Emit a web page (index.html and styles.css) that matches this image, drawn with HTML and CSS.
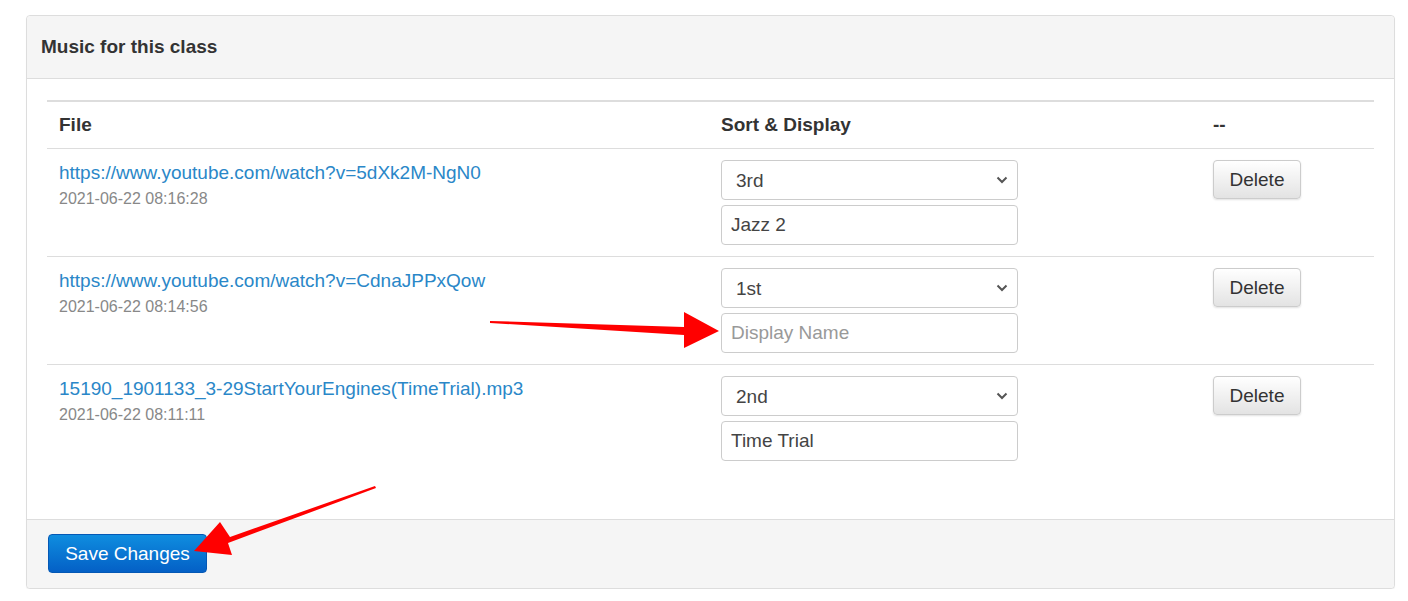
FILE: index.html
```html
<!DOCTYPE html>
<html lang="en">
<head>
    <meta charset="UTF-8">
    <title>Music for this class</title>
    <link rel="stylesheet" href="styles.css">
</head>
<body>
    <div class="panel">
        <div class="panel-heading">Music for this class</div>
        <div class="panel-body">
            <table class="music-table">
                <thead>
                    <tr>
                        <th class="col-file">File</th>
                        <th class="col-sort">Sort &amp; Display</th>
                        <th class="col-action">--</th>
                    </tr>
                </thead>
                <tbody>
                    <tr>
                        <td>
                            <a href="#" class="file-link">https://www.youtube.com/watch?v=5dXk2M-NgN0</a>
                            <div class="file-date">2021-06-22 08:16:28</div>
                        </td>
                        <td>
                            <div class="select-wrap">
                                <select class="field">
                                    <option>1st</option>
                                    <option>2nd</option>
                                    <option selected>3rd</option>
                                </select>
                                <svg class="chevron" width="12" height="8" viewBox="0 0 12 8"><path d="M1.5 1.5 L6 6 L10.5 1.5" fill="none" stroke="#555" stroke-width="2"/></svg>
                            </div>
                            <input type="text" class="field" value="Jazz 2" placeholder="Display Name">
                        </td>
                        <td><button class="btn-delete">Delete</button></td>
                    </tr>
                    <tr>
                        <td>
                            <a href="#" class="file-link">https://www.youtube.com/watch?v=CdnaJPPxQow</a>
                            <div class="file-date">2021-06-22 08:14:56</div>
                        </td>
                        <td>
                            <div class="select-wrap">
                                <select class="field">
                                    <option selected>1st</option>
                                    <option>2nd</option>
                                    <option>3rd</option>
                                </select>
                                <svg class="chevron" width="12" height="8" viewBox="0 0 12 8"><path d="M1.5 1.5 L6 6 L10.5 1.5" fill="none" stroke="#555" stroke-width="2"/></svg>
                            </div>
                            <input type="text" class="field" value="" placeholder="Display Name">
                        </td>
                        <td><button class="btn-delete">Delete</button></td>
                    </tr>
                    <tr>
                        <td>
                            <a href="#" class="file-link">15190_1901133_3-29StartYourEngines(TimeTrial).mp3</a>
                            <div class="file-date">2021-06-22 08:11:11</div>
                        </td>
                        <td>
                            <div class="select-wrap">
                                <select class="field">
                                    <option>1st</option>
                                    <option selected>2nd</option>
                                    <option>3rd</option>
                                </select>
                                <svg class="chevron" width="12" height="8" viewBox="0 0 12 8"><path d="M1.5 1.5 L6 6 L10.5 1.5" fill="none" stroke="#555" stroke-width="2"/></svg>
                            </div>
                            <input type="text" class="field" value="Time Trial" placeholder="Display Name">
                        </td>
                        <td><button class="btn-delete">Delete</button></td>
                    </tr>
                </tbody>
            </table>
        </div>
        <div class="panel-footer">
            <button class="btn-save">Save Changes</button>
        </div>
    </div>

    <!-- annotation arrows drawn over the screenshot -->
    <svg class="annotations" width="1408" height="601" viewBox="0 0 1408 601">
        <polygon fill="#f00" points="490,321 684,327 684,312 719,331 684,348 684,335 490,323"/>
        <polygon fill="#f00" points="375,486 230,537 220,522 194,551 232,555 228,543 376,488"/>
    </svg>
</body>
</html>
```

FILE: styles.css
```css
body {
    font-family: "Liberation Sans", Arial, sans-serif;
    color: #333;
    background-color: #fff;
    margin: 0;
    padding: 15px 13px 0 26px;
    position: relative;
}

.panel {
    border: 1px solid #ddd;
    border-radius: 4px;
    background-color: #fff;
    box-shadow: 0 1px 1px rgba(0, 0, 0, 0.05);
}

.panel-heading {
    background-color: #f5f5f5;
    border-bottom: 1px solid #ddd;
    border-radius: 4px 4px 0 0;
    padding: 0 14px;
    height: 62px;
    line-height: 62px;
    font-size: 19px;
    font-weight: bold;
    color: #333;
}

.panel-body {
    padding: 21px 20px 47px;
}

.music-table {
    width: 100%;
    border-collapse: collapse;
    border-top: 2px solid #ddd;
}

.music-table th {
    text-align: left;
    font-size: 19px;
    font-weight: bold;
    padding: 11px 12px 12px;
    line-height: 23px;
    border-bottom: 1px solid #ddd;
}

.col-file {
    width: 638px;
}

.col-sort {
    width: 468px;
}

.music-table td {
    vertical-align: top;
    padding: 11px 12px 11px;
    border-top: 1px solid #ddd;
}

.music-table tbody tr:first-child td {
    border-top: none;
}

.file-link {
    display: block;
    color: #2a87c8;
    text-decoration: none;
    font-size: 19px;
    line-height: 25px;
}

.file-date {
    color: #888;
    font-size: 16px;
    line-height: 28px;
}

.select-wrap {
    position: relative;
    width: 297px;
    margin-bottom: 5px;
}

.field {
    display: block;
    box-sizing: border-box;
    width: 297px;
    height: 40px;
    border: 1px solid #ccc;
    border-radius: 4px;
    background-color: #fff;
    font-family: "Liberation Sans", Arial, sans-serif;
    font-size: 19px;
    color: #444;
    padding: 0 9px;
}

select.field {
    appearance: none;
    -webkit-appearance: none;
    padding-left: 14px;
}

.field::placeholder {
    color: #999;
}

.chevron {
    position: absolute;
    right: 10px;
    top: 16px;
    pointer-events: none;
}

.btn-delete {
    width: 88px;
    height: 39px;
    font-family: "Liberation Sans", Arial, sans-serif;
    font-size: 19px;
    color: #333;
    background: linear-gradient(#fff, #e3e3e3);
    border: 1px solid #ccc;
    border-radius: 4px;
    box-shadow: 0 1px 2px rgba(0, 0, 0, 0.12);
    cursor: pointer;
}

.panel-footer {
    background-color: #f5f5f5;
    border-top: 1px solid #ddd;
    border-radius: 0 0 4px 4px;
    padding: 14px 21px 15px;
}

.btn-save {
    width: 159px;
    height: 39px;
    font-family: "Liberation Sans", Arial, sans-serif;
    font-size: 19px;
    color: #fff;
    background: linear-gradient(#0f8ddf, #0460c6);
    border: 1px solid #0458b5;
    border-radius: 4px;
    cursor: pointer;
}

.annotations {
    position: absolute;
    left: 0;
    top: 0;
    pointer-events: none;
}
```
